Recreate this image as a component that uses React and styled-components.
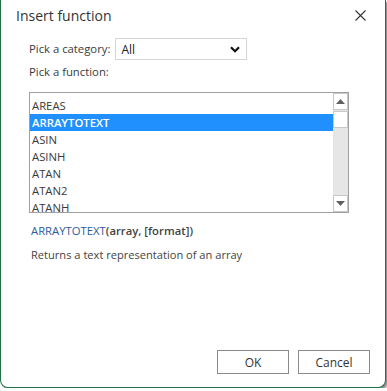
import React, { useState } from "react";
import styled, { createGlobalStyle } from "styled-components";

const GlobalStyle = createGlobalStyle`
	body {
		margin: 0;
		background: #ffffff;
		font-family: "Open Sans", "Noto Sans", sans-serif;
		color: #333;
	}
`;

const FUNCTIONS = ["AREAS", "ARRAYTOTEXT", "ASIN", "ASINH", "ATAN", "ATAN2", "ATANH", "AVEDEV"];

const App = () => {
	const [selected, setSelected] = useState("ARRAYTOTEXT");

	return (
		<>
			<GlobalStyle />
			<Dialog>
				<Header>
					<Title>Insert function</Title>
					<CloseButton aria-label="Close">
						<svg width="11" height="11" viewBox="0 0 11 11">
							<path d="M0.5 0.5 L10.5 10.5 M10.5 0.5 L0.5 10.5" stroke="#333" strokeWidth="1.1" fill="none" />
						</svg>
					</CloseButton>
				</Header>
				<Body>
					<CategoryRow>
						<Label>Pick a category:</Label>
						<Select>
							<span>All</span>
							<svg width="10" height="7" viewBox="0 0 10 7">
								<path d="M1 1.2 L5 5.2 L9 1.2" stroke="#111" strokeWidth="2.2" fill="none" />
							</svg>
						</Select>
					</CategoryRow>
					<Label>Pick a function:</Label>
					<ListBox>
						<Items>
							{FUNCTIONS.map(name => (
								<Item key={name} $active={name === selected} onClick={() => setSelected(name)}>
									{name}
								</Item>
							))}
						</Items>
						<ScrollBar>
							<ScrollButton>
								<svg width="9" height="5" viewBox="0 0 9 5">
									<path d="M0 5 L4.5 0 L9 5 Z" fill="#606060" />
								</svg>
							</ScrollButton>
							<Thumb />
							<Track />
							<ScrollButton>
								<svg width="9" height="5" viewBox="0 0 9 5">
									<path d="M0 0 L4.5 5 L9 0 Z" fill="#606060" />
								</svg>
							</ScrollButton>
						</ScrollBar>
					</ListBox>
					<Signature>
						<FnName>ARRAYTOTEXT</FnName>
						<Args>(array, [format])</Args>
					</Signature>
					<Description>Returns a text representation of an array</Description>
				</Body>
				<Footer>
					<Button>OK</Button>
					<Button>Cancel</Button>
				</Footer>
			</Dialog>
		</>
	);
};

export default App;

const Dialog = styled.div`
	box-sizing: border-box;
	width: 386px;
	height: 388px;
	display: flex;
	flex-direction: column;
	background: #fff;
	border: 1px solid #217346;
	border-top: none;
	border-radius: 0 0 8px 8px;
	box-shadow: 2px 2px 2px rgba(0, 0, 0, 0.45);
`;

const Header = styled.div`
	display: flex;
	align-items: center;
	justify-content: space-between;
	padding: 3px 19px 0 15px;
	height: 24px;
`;

const Title = styled.h1`
	margin: 0;
	font-size: 14px;
	font-weight: 400;
	color: #333;
`;

const CloseButton = styled.button`
	display: flex;
	padding: 0;
	border: none;
	background: transparent;
	cursor: pointer;
`;

const Body = styled.div`
	display: flex;
	flex-direction: column;
	padding: 11px 0 0 28px;
`;

const CategoryRow = styled.div`
	display: flex;
	align-items: center;
	gap: 5px;
	margin-bottom: 4px;
`;

const Label = styled.div`
	font-size: 11.3px;
	color: #3a3a3a;
	line-height: 16px;
`;

const Select = styled.div`
	box-sizing: border-box;
	width: 132px;
	height: 22px;
	display: flex;
	align-items: center;
	justify-content: space-between;
	padding: 0 6px 0 5px;
	border: 1px solid #d6d6d6;
	font-size: 12px;
	color: #222;
`;

const ListBox = styled.div`
	box-sizing: border-box;
	width: 320px;
	height: 121px;
	margin-top: 12px;
	display: flex;
	border: 1px solid #a0a0a0;
	overflow: hidden;
`;

const Items = styled.div`
	flex: 1;
	padding-top: 4px;
	overflow: hidden;
`;

const Item = styled.div`
	height: 17px;
	line-height: 17px;
	padding-left: 2px;
	font-size: 11.3px;
	color: ${p => (p.$active ? "#fff" : "#3a3a3a")};
	background: ${p => (p.$active ? "#2090ff" : "transparent")};
	font-weight: ${p => (p.$active ? 600 : 400)};
	cursor: default;
`;

const ScrollBar = styled.div`
	width: 15px;
	display: flex;
	flex-direction: column;
	background: #e6e6e6;
`;

const ScrollButton = styled.div`
	box-sizing: border-box;
	height: 17px;
	display: flex;
	align-items: center;
	justify-content: center;
	background: #fff;
	border: 1px solid #c8c8c8;
`;

const Thumb = styled.div`
	box-sizing: border-box;
	height: 17px;
	margin-top: 1px;
	background: #fff;
	border: 1px solid #c8c8c8;
`;

const Track = styled.div`
	flex: 1;
`;

const Signature = styled.div`
	margin: 10px 0 0 2px;
	font-size: 11.3px;
	line-height: 16px;
	white-space: nowrap;
`;

const FnName = styled.span`
	color: #2e5c9a;
`;

const Args = styled.span`
	color: #444;
	font-weight: 600;
`;

const Description = styled.div`
	margin: 8px 0 0 2px;
	font-size: 11.1px;
	line-height: 16px;
	color: #444;
`;

const Footer = styled.div`
	margin-top: auto;
	display: flex;
	justify-content: flex-end;
	gap: 9px;
	padding: 0 15px 13px 0;
`;

const Button = styled.button`
	box-sizing: border-box;
	width: 72px;
	height: 24px;
	background: #fff;
	border: 1px solid #8a8a8a;
	font-family: "Open Sans", "Noto Sans", sans-serif;
	font-size: 12px;
	color: #333;
	cursor: pointer;
`;
